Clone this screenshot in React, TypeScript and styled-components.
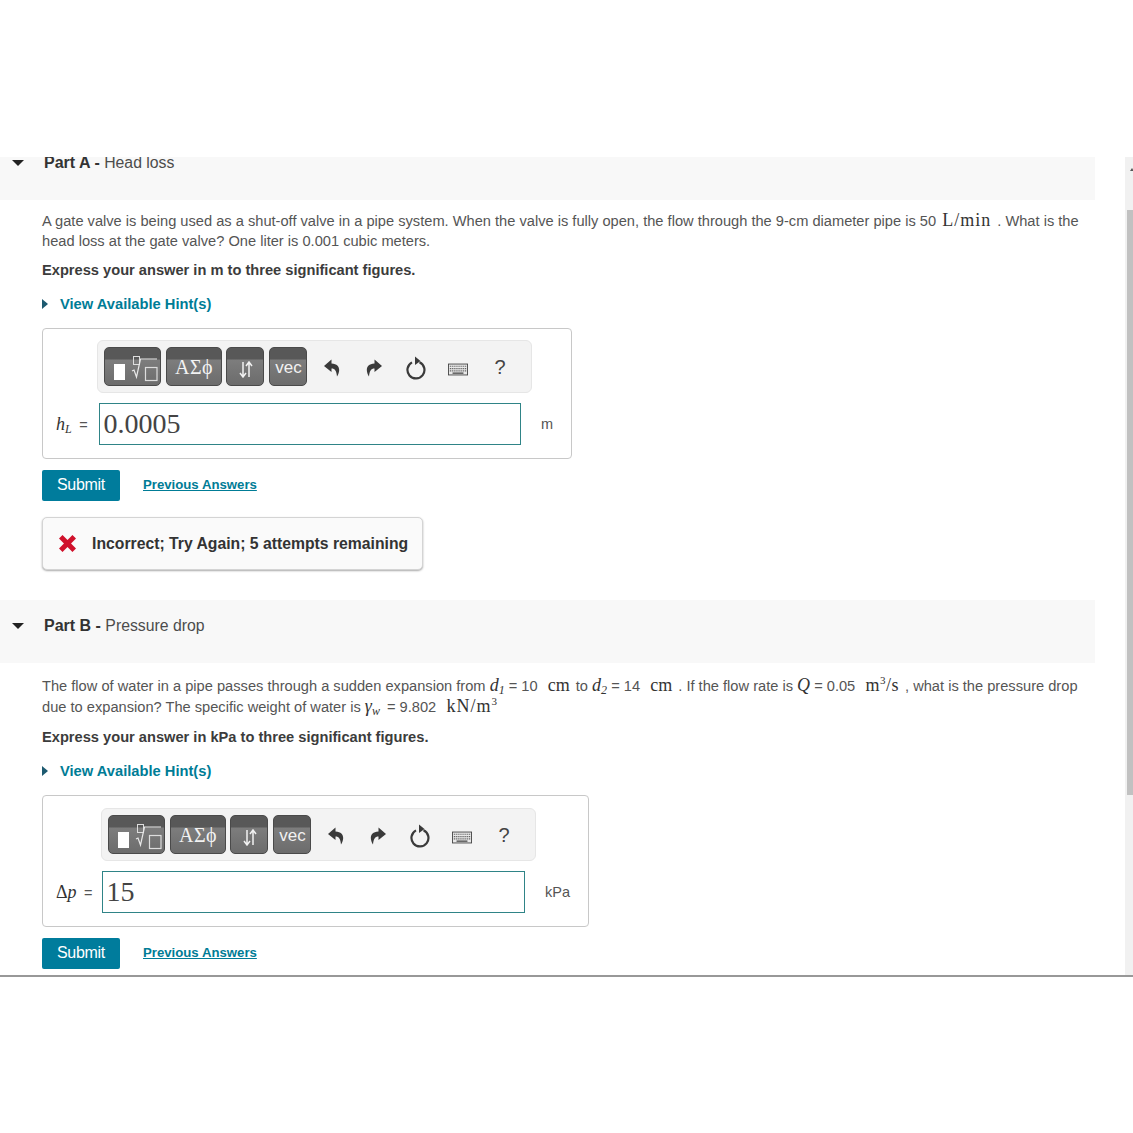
import React from 'react';
import styled, {createGlobalStyle} from 'styled-components';

const GlobalStyle = createGlobalStyle`
  html, body {
    margin: 0;
    padding: 0;
    background: #fff;
  }
  body {
    font-family: "Liberation Sans", Arial, sans-serif;
    color: #444;
  }
`

const Page = styled.div`
  width: 1133px;
  height: 1133px;
  padding-top: 157px;
  box-sizing: border-box;
`
const Frame = styled.div`
  height: 820px;
  display: flex;
  justify-content: space-between;
  overflow: hidden;
  border-bottom: 2px solid #989898;
  box-sizing: border-box;
`
const Content = styled.div`
  width: 1095px;
  flex: none;
`
const Scrollbar = styled.div`
  width: 8px;
  background: #f1f1f1;
  padding: 11px 0 0 2px;
  box-sizing: border-box;
`
const ScrollArrow = styled.div`
  width: 0;
  height: 0;
  margin: 0 0 39px 3px;
  border-left: 2px solid transparent;
  border-right: 2px solid transparent;
  border-bottom: 3px solid #555;
`
const ScrollThumb = styled.div`
  height: 585px;
  background: #c1c1c1;
`
const PartHeader = styled.div<{$clip?: boolean}>`
  height: 63px;
  margin-top: ${props => props.$clip ? '-20px' : '0'};
  padding-bottom: 11px;
  box-sizing: border-box;
  background: #f8f8f8;
  display: flex;
  align-items: center;
  font-size: 15.8px;
  color: #4c4c4c;
`
const Caret = styled.span`
  width: 0;
  height: 0;
  margin: 0 20px 0 12px;
  border-left: 6px solid transparent;
  border-right: 6px solid transparent;
  border-top: 6px solid #222;
`
const PartName = styled.b`
  font-size: 16px;
  color: #333;
  white-space: pre;
`
const Body = styled.div<{$top: number}>`
  padding: ${props => props.$top}px 0 0 42px;
`
const Question = styled.p<{$lh: number}>`
  margin: 0;
  width: 1045px;
  font-size: 14.65px;
  line-height: ${props => props.$lh}px;
  color: #555;
`
const Strong = styled.p`
  margin: 9px 0 0;
  font-size: 14.65px;
  line-height: 20px;
  font-weight: bold;
  color: #3c3c3c;
`
const Hint = styled.div`
  display: flex;
  align-items: center;
  margin: 14px 0;
  height: 20px;
  font-size: 14.7px;
  font-weight: bold;
  color: #007c96;
`
const HintArrow = styled.span`
  width: 0;
  height: 0;
  margin-right: 12px;
  border-top: 5px solid transparent;
  border-bottom: 5px solid transparent;
  border-left: 6px solid #1d5a70;
`
const MathText = styled.span<{$spread?: number}>`
  margin: 0 2px;
  font-family: "Liberation Serif", "DejaVu Serif", serif;
  font-size: 18px;
  line-height: 0;
  letter-spacing: ${props => props.$spread || 0}px;
  color: #333;
`
const MathItalic = styled.span<{$after?: number}>`
  margin-right: ${props => props.$after || 0}px;
  font-family: "Liberation Serif", "DejaVu Serif", serif;
  font-size: 18px;
  font-style: italic;
  line-height: 0;
  color: #333;
`
const Sub = styled.span`
  font-size: 12px;
  line-height: 0;
  vertical-align: -3px;
`
const Sup = styled.sup`
  font-size: 11px;
  line-height: 0;
`
const AnswerBox = styled.div<{$width: number; $label: number; $pad: number}>`
  width: ${props => props.$width}px;
  box-sizing: border-box;
  padding: ${props => props.$pad}px 0 13px 13px;
  border: 1px solid #c8c8c8;
  border-radius: 4px;
  display: grid;
  grid-template-columns: ${props => props.$label}px auto 1fr;
  grid-template-rows: 53px 42px;
  row-gap: 10px;
  align-items: center;
`
const Toolbar = styled.div`
  grid-column: 2 / 4;
  width: 435px;
  height: 53px;
  box-sizing: border-box;
  padding: 6px 0 0 6px;
  background: #f3f3f3;
  border: 1px solid #e6e6e6;
  border-radius: 6px;
  display: flex;
  align-items: flex-start;
`
const ToolButton = styled.div<{$width: number}>`
  flex: none;
  width: ${props => props.$width}px;
  height: 39px;
  margin-right: 4.5px;
  box-sizing: border-box;
  border: 1px solid #4a4a4a;
  border-radius: 5px;
  background: linear-gradient(#585858 0, #585858 11px, #7d7d7d 12px, #6c6c6c 100%);
  color: #f2f2f2;
  display: flex;
  align-items: center;
  justify-content: center;
`
const GreekText = styled.span`
  margin: 2px 0 0 1px;
  font-family: "Liberation Serif", serif;
  font-size: 20px;
  letter-spacing: 0.5px;
`
const VecText = styled.span`
  margin: 2px 0 0 2px;
  font-family: "Liberation Sans", sans-serif;
  font-size: 17px;
`
const ArrowsSvg = styled.svg`
  margin: 5px 0 0 2px;
`
const KeyboardSvg = styled.svg`
  margin-top: 4px;
`
const ToolIcons = styled.div`
  display: flex;
  align-items: center;
  height: 39px;
  margin: 1px 0 0 11px;
  gap: 22px;
`
const IconSlot = styled.div`
  width: 20px;
  display: flex;
  justify-content: center;
  align-items: center;
`
const HelpMark = styled.span`
  font-size: 20px;
  color: #444;
`
const VarLabel = styled.div`
  font-family: "Liberation Serif", serif;
  font-size: 18px;
  color: #333;
  white-space: pre;
`
const EqSign = styled.span`
  margin-left: 3px;
  font-family: "Liberation Sans", sans-serif;
  font-size: 14.5px;
  font-style: normal;
  color: #555;
`
const AnswerInput = styled.div<{$width: number; $offset: number}>`
  width: ${props => props.$width}px;
  height: 42px;
  margin-left: ${props => props.$offset}px;
  box-sizing: border-box;
  border: 1px solid #2f8487;
  padding-left: 3.5px;
  font-family: "Liberation Serif", serif;
  font-size: 28px;
  line-height: 40px;
  color: #444;
`
const Unit = styled.div`
  margin-left: 20px;
  font-size: 14.5px;
  color: #555;
`
const SubmitRow = styled.div`
  display: flex;
  align-items: center;
  margin-top: 11px;
`
const SubmitButton = styled.div`
  width: 78px;
  height: 31px;
  background: #007c9c;
  border-radius: 2px;
  color: #fff;
  font-size: 16px;
  line-height: 29px;
  text-align: center;
  letter-spacing: -0.3px;
`
const PrevLink = styled.a`
  margin: -2px 0 0 23px;
  color: #007c96;
  font-size: 13.2px;
  font-weight: bold;
  text-decoration: underline;
`
const Feedback = styled.div`
  width: 381px;
  height: 53px;
  margin: 16px 0 30px;
  box-sizing: border-box;
  padding-left: 16px;
  background: #fafafa;
  border: 1px solid #d4d4d4;
  border-radius: 5px;
  box-shadow: 0 1px 2px #aaa;
  display: flex;
  align-items: center;
  font-size: 15.75px;
  font-weight: bold;
  color: #333;
`
const FeedbackText = styled.span`
  margin-left: 16px;
  white-space: nowrap;
`

const TemplatesIcon = () => (
    <svg width="55" height="37" viewBox="0 0 55 37">
        <rect x="9" y="16" width="11" height="16" fill="#fff"/>
        <rect x="28.5" y="8.5" width="6" height="8" fill="none" stroke="#ddd" strokeWidth="1"/>
        <path d="M27 23 L29 22 L31.5 29 L35.5 11 L52 11" fill="none" stroke="#e8e8e8" strokeWidth="1.2"/>
        <rect x="40.5" y="19.5" width="11.5" height="13" fill="none" stroke="#ddd" strokeWidth="1.2"/>
    </svg>
)
const ArrowsIcon = () => (
    <ArrowsSvg width="14" height="17" viewBox="0 0 14 17">
        <path d="M4 1 V15.5 M1 12 L4 16 L7 12" fill="none" stroke="#f2f2f2" strokeWidth="1.5"/>
        <path d="M10 16 V1.5 M7 5 L10 1 L13 5" fill="none" stroke="#f2f2f2" strokeWidth="1.5"/>
    </ArrowsSvg>
)
const UndoIcon = () => (
    <svg width="16" height="18" viewBox="0 0 16 18">
        <path d="M7.5 0.5 L0 7 L7.5 13 V9.5 C11 9.5 12.5 12 13 17.5 C16.5 12 16.5 5 7.5 4.5 Z" fill="#3a3a3a"/>
    </svg>
)
const RedoIcon = () => (
    <svg width="16" height="18" viewBox="0 0 16 18">
        <path d="M8.5 0.5 L16 7 L8.5 13 V9.5 C5 9.5 3.5 12 3 17.5 C-0.5 12 -0.5 5 8.5 4.5 Z" fill="#3a3a3a"/>
    </svg>
)
const ResetIcon = () => (
    <svg width="20" height="24" viewBox="0 0 20 24">
        <path d="M6 6.4 A8.5 8.5 0 1 0 13.5 6.2" fill="none" stroke="#3a3a3a" strokeWidth="2.2"/>
        <path d="M9 0.5 L14.5 5 L9 9 Z" fill="#3a3a3a"/>
    </svg>
)
const KeyboardIcon = () => (
    <KeyboardSvg width="22" height="13" viewBox="0 0 22 13">
        <rect x="0.5" y="0.5" width="21" height="12" fill="#e8e8e8" stroke="#444"/>
        <path d="M2 3 H20 M2 5.5 H20 M2 8 H20" stroke="#555" strokeWidth="1.2" strokeDasharray="1.2 0.9"/>
        <path d="M5 10.5 H17" stroke="#444" strokeWidth="1.4"/>
    </KeyboardSvg>
)
const CrossIcon = () => (
    <svg width="17" height="17" viewBox="2 2 12 12">
        <path d="M2 4.5 L4.5 2 L8 5.5 L11.5 2 L14 4.5 L10.5 8 L14 11.5 L11.5 14 L8 10.5 L4.5 14 L2 11.5 L5.5 8 Z" fill="#d0112b"/>
    </svg>
)

const MathToolbar = () => {
    return (
        <Toolbar>
            <ToolButton $width={57}><TemplatesIcon/></ToolButton>
            <ToolButton $width={56}><GreekText>ΑΣϕ</GreekText></ToolButton>
            <ToolButton $width={38}><ArrowsIcon/></ToolButton>
            <ToolButton $width={38}><VecText>vec</VecText></ToolButton>
            <ToolIcons>
                <IconSlot><UndoIcon/></IconSlot>
                <IconSlot><RedoIcon/></IconSlot>
                <IconSlot><ResetIcon/></IconSlot>
                <IconSlot><KeyboardIcon/></IconSlot>
                <IconSlot><HelpMark>?</HelpMark></IconSlot>
            </ToolIcons>
        </Toolbar>
    )
}

const HintLine = () => (
    <Hint><HintArrow/>View Available Hint(s)</Hint>
)

export default function App() {
    return (
        <Page>
            <GlobalStyle/>
            <Frame>
                <Content>
                    <PartHeader $clip>
                        <Caret/>
                        <span><PartName>Part A - </PartName>Head loss</span>
                    </PartHeader>
                    <Body $top={11}>
                        <Question $lh={20}>
                            A gate valve is being used as a shut-off valve in a pipe system. When the valve is fully open, the flow through the 9-cm diameter pipe is 50 <MathText $spread={1}>L/min</MathText> . What is the head loss at the gate valve? One liter is 0.001 cubic meters.
                        </Question>
                        <Strong>Express your answer in m to three significant figures.</Strong>
                        <HintLine/>
                        <AnswerBox $width={530} $label={41} $pad={11}>
                            <MathToolbar/>
                            <VarLabel><MathItalic>h<Sub>L</Sub></MathItalic> <EqSign>=</EqSign></VarLabel>
                            <AnswerInput $width={422} $offset={2}>0.0005</AnswerInput>
                            <Unit>m</Unit>
                        </AnswerBox>
                        <SubmitRow>
                            <SubmitButton>Submit</SubmitButton>
                            <PrevLink>Previous Answers</PrevLink>
                        </SubmitRow>
                        <Feedback>
                            <CrossIcon/>
                            <FeedbackText>Incorrect; Try Again; 5 attempts remaining</FeedbackText>
                        </Feedback>
                    </Body>
                    <PartHeader>
                        <Caret/>
                        <span><PartName>Part B - </PartName>Pressure drop</span>
                    </PartHeader>
                    <Body $top={13}>
                        <Question $lh={21}>
                            The flow of water in a pipe passes through a sudden expansion from <MathItalic>d<Sub>1</Sub></MathItalic> = 10 &nbsp;<MathText>cm</MathText> to <MathItalic>d<Sub>2</Sub></MathItalic> = 14 &nbsp;<MathText>cm</MathText> . If the flow rate is <MathItalic>Q</MathItalic> = 0.05 &nbsp;<MathText $spread={0.5}>m<Sup>3</Sup>/s</MathText> , what is the pressure drop due to expansion? The specific weight of water is <MathItalic $after={3}>γ<Sub>w</Sub></MathItalic> = 9.802 &nbsp;<MathText $spread={1}>kN/m<Sup>3</Sup></MathText>
                        </Question>
                        <Strong>Express your answer in kPa to three significant figures.</Strong>
                        <HintLine/>
                        <AnswerBox $width={547} $label={45} $pad={12}>
                            <MathToolbar/>
                            <VarLabel>Δ<MathItalic>p</MathItalic> <EqSign>=</EqSign></VarLabel>
                            <AnswerInput $width={423} $offset={1}>15</AnswerInput>
                            <Unit>kPa</Unit>
                        </AnswerBox>
                        <SubmitRow>
                            <SubmitButton>Submit</SubmitButton>
                            <PrevLink>Previous Answers</PrevLink>
                        </SubmitRow>
                    </Body>
                </Content>
                <Scrollbar>
                    <ScrollArrow/>
                    <ScrollThumb/>
                </Scrollbar>
            </Frame>
        </Page>
    )
}
